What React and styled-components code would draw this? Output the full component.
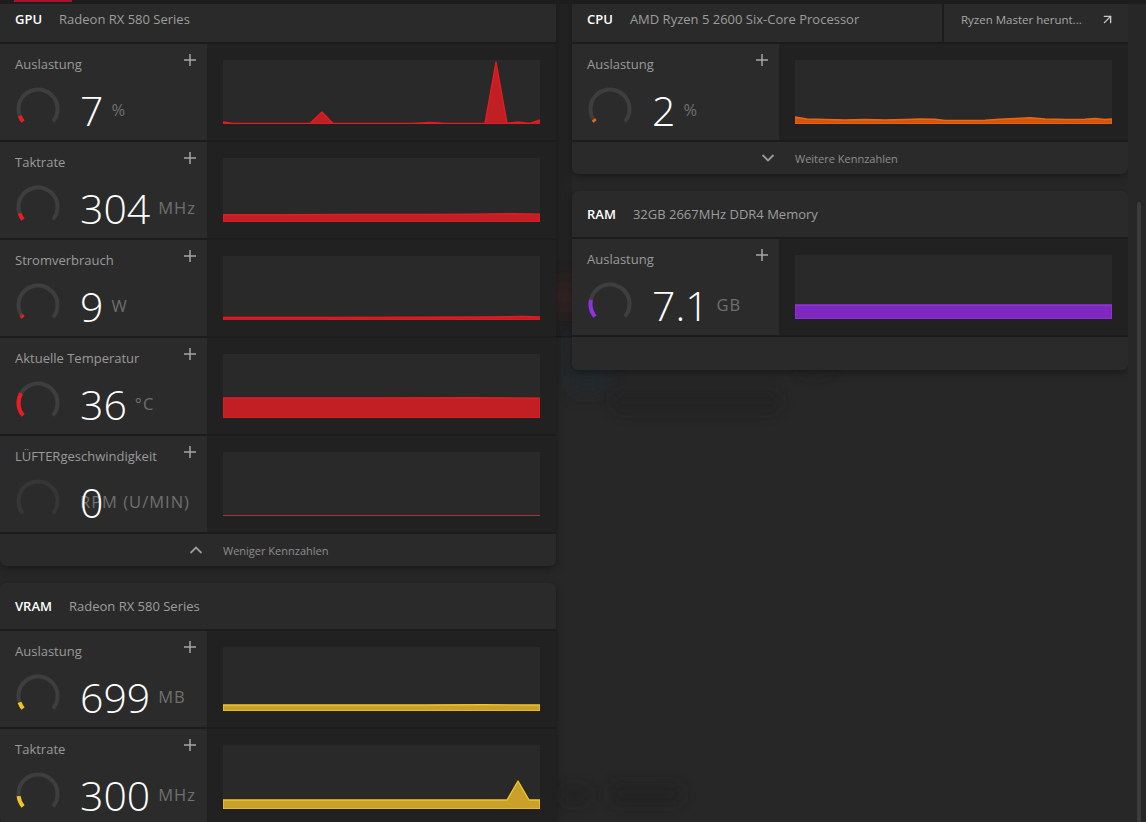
import React from "react";
import styled, { createGlobalStyle } from "styled-components";
import { ArrowUpRight } from "lucide-react";

const GlobalStyle = createGlobalStyle`
  html, body { margin: 0; padding: 0; background: #272727; }
  body { font-family: "Open Sans", "Noto Sans", "DejaVu Sans", sans-serif; color: #fff; }
  * { box-sizing: border-box; }
`;

const COLORS = {
  red: { fill: "#c11f24", stroke: "#e51b22", gauge: "#ec1c22" },
  orange: { fill: "#d4560e", stroke: "#f0650f", gauge: "#f0640f" },
  purple: { fill: "#7e28c0", stroke: "#9234de", gauge: "#9030e0" },
  yellow: { fill: "#c9a02a", stroke: "#f2c424", gauge: "#f2c424" },
};

const Screen = styled.div`
  display: grid;
  width: 1146px;
  height: 822px;
  overflow: hidden;
  background: #272727;
`;

const Backdrop = styled.svg`
  grid-area: 1 / 1;
  width: 1146px;
  height: 822px;
`;

const Frame = styled.div`
  grid-area: 1 / 1;
  display: flex;
  flex-direction: column;
  min-height: 0;
`;

const TopBar = styled.div`
  height: 4px;
  flex: none;
  background: #1d1d1d;
  padding-left: 14px;
`;

const RedTab = styled.div`
  width: 58px;
  height: 2px;
  background: #a8142c;
`;

const Body = styled.div`
  flex: 1;
  display: flex;
  min-height: 0;
`;

const Viewport = styled.div`
  flex: 1;
  overflow: hidden;
`;

const Content = styled.div`
  margin-top: -8px;
  display: flex;
  gap: 16px;
  align-items: flex-start;
`;

const Column = styled.div`
  width: 556px;
  display: flex;
  flex-direction: column;
  gap: 17px;
`;

const ScrollTrack = styled.div`
  width: 18px;
  flex: none;
  padding: 198px 5px 0 9px;
`;

const ScrollThumb = styled.div`
  height: 100%;
  border-radius: 2px;
  background: #3c3c3c;
`;

const Card = styled.section`
  display: flex;
  flex-direction: column;
  gap: 2px;
  background: #1c1c1c;
  border-radius: 6px;
  overflow: hidden;
  box-shadow: 0 3px 8px rgba(0, 0, 0, 0.35);
`;

const Header = styled.header`
  display: flex;
  gap: 2px;
  height: 46px;
`;

const HeaderMain = styled.div`
  flex: 1;
  display: flex;
  align-items: center;
  gap: 17px;
  padding: 0 15px;
  background: #2a2a2a;
`;

const Title = styled.span`
  font-size: 13px;
  font-weight: 600;
  color: #ffffff;
`;

const Subtitle = styled.span`
  font-size: 13px;
  color: #9d9d9d;
`;

const HeaderAction = styled.div`
  width: 184px;
  flex: none;
  display: flex;
  align-items: center;
  justify-content: space-between;
  padding: 0 13px 0 17px;
  background: #2a2a2a;
  font-size: 11.5px;
  color: #a8a8a8;
  svg { color: #c8c8c8; }
`;

const Row = styled.div`
  display: grid;
  grid-template-columns: 207px 1fr;
  height: 96px;
`;

const MetricPanel = styled.div`
  background: #2b2b2b;
  padding: 10px 11px 0 15px;
  display: flex;
  flex-direction: column;
`;

const MetricHead = styled.div`
  display: flex;
  justify-content: space-between;
  align-items: flex-start;
`;

const Label = styled.span`
  font-size: 13px;
  line-height: 20px;
  color: #9a9a9a;
`;

const ValueLine = styled.div`
  margin-top: 12px;
  display: flex;
  align-items: center;
  gap: 20px;
`;

const GaugeSvg = styled.svg`
  width: 44px;
  height: 44px;
  margin-left: 1px;
  flex: none;
`;

const Reading = styled.div`
  display: ${(p) => (p.$overlap ? "grid" : "flex")};
  align-items: center;
  gap: 8px;
  padding-top: 2px;
  > * { grid-area: ${(p) => (p.$overlap ? "1 / 1" : "auto")}; }
`;

const Value = styled.span`
  font-size: 41px;
  line-height: 44px;
  font-weight: 300;
  color: #ffffff;
`;

const Unit = styled.span`
  font-size: 16.5px;
  letter-spacing: 1px;
  line-height: 22px;
  color: #6f6f6f;
`;

const ChartPanel = styled.div`
  background: #212121;
  padding: 16px;
`;

const ChartSvg = styled.svg`
  display: block;
  width: 100%;
  height: 64px;
  background: #292929;
`;

const Footer = styled.div`
  display: grid;
  grid-template-columns: 207px 1fr;
  align-items: center;
  height: 32px;
  background: #2a2a2a;
`;

const FooterIcon = styled.svg`
  justify-self: end;
  margin-right: 4px;
  width: 14px;
  height: 8px;
`;

const FooterText = styled.span`
  padding-left: 16px;
  font-size: 11px;
  color: #8e8e8e;
`;

const EmptyFooter = styled.div`
  height: 33px;
  background: #2a2a2a;
`;

function PlusIcon() {
  return (
    <svg width="12" height="12" viewBox="0 0 12 12" style={{ flex: "none" }}>
      <path d="M6 0V12M0 6H12" stroke="#a6a6a6" strokeWidth="1.5" fill="none" />
    </svg>
  );
}

function Chevron({ up }) {
  return (
    <FooterIcon viewBox="0 0 14 8">
      <path
        d={up ? "M1.5 7L7 1.5L12.5 7" : "M1.5 1L7 6.5L12.5 1"}
        stroke="#9a9a9a"
        strokeWidth="1.8"
        fill="none"
      />
    </FooterIcon>
  );
}

const START = 140;
const SWEEP = 260;
function pt(a, r) {
  const rad = (a * Math.PI) / 180;
  return [22 + r * Math.cos(rad), 22 + r * Math.sin(rad)];
}
function arc(a0, a1, r) {
  const [x0, y0] = pt(a0, r);
  const [x1, y1] = pt(a1, r);
  const large = a1 - a0 > 180 ? 1 : 0;
  return `M${x0.toFixed(2)} ${y0.toFixed(2)} A${r} ${r} 0 ${large} 1 ${x1.toFixed(2)} ${y1.toFixed(2)}`;
}

function Gauge({ fraction, color, dim }) {
  const r = 19.5;
  return (
    <GaugeSvg viewBox="0 0 44 44">
      <path d={arc(START, START + SWEEP, r)} stroke={dim ? "#363636" : "#3e3e3e"} strokeWidth="4" fill="none" />
      {fraction > 0 && (
        <path d={arc(START, START + SWEEP * fraction, r)} stroke={color} strokeWidth="4" fill="none" />
      )}
    </GaugeSvg>
  );
}

function Chart({ points, color, line }) {
  const W = 317;
  const H = 64;
  if (line) {
    const d = points.map(([x, h], i) => `${i ? "L" : "M"}${x} ${H - h}`).join(" ");
    return (
      <ChartSvg viewBox={`0 0 ${W} ${H}`} preserveAspectRatio="none">
        <path d={d} stroke={line} strokeWidth="1" fill="none" />
      </ChartSvg>
    );
  }
  const c = COLORS[color];
  const d =
    `M0 ${H} ` + points.map(([x, h]) => `L${x} ${(H - h).toFixed(2)}`).join(" ") + ` L${W} ${H} Z`;
  return (
    <ChartSvg viewBox={`0 0 ${W} ${H}`} preserveAspectRatio="none">
      <path d={d} fill={c.fill} stroke={c.stroke} strokeWidth="1.4" strokeLinejoin="round" />
    </ChartSvg>
  );
}

function Metric({ label, value, unit, fraction, color, points, line, overlap, dim }) {
  return (
    <Row>
      <MetricPanel>
        <MetricHead>
          <Label>{label}</Label>
          <PlusIcon />
        </MetricHead>
        <ValueLine>
          <Gauge fraction={fraction} color={COLORS[color].gauge} dim={dim} />
          <Reading $overlap={overlap}>
            {overlap ? (
              <>
                <Unit>{unit}</Unit>
                <Value>{value}</Value>
              </>
            ) : (
              <>
                <Value>{value}</Value>
                <Unit>{unit}</Unit>
              </>
            )}
          </Reading>
        </ValueLine>
      </MetricPanel>
      <ChartPanel>
        <Chart points={points} color={color} line={line} />
      </ChartPanel>
    </Row>
  );
}

const gpuLoad = [
  [0, 2], [10, 0.6], [87, 0.6], [99, 12], [110, 0.6], [190, 0.6], [207, 1.6], [222, 0.6],
  [262, 0.6], [273, 62], [284, 0.6], [295, 2], [307, 0.6], [317, 4],
];
const gpuClock = [[0, 7.2], [60, 7.2], [130, 7.5], [200, 7.5], [250, 7.8], [290, 8.3], [317, 7.9]];
const gpuPower = [[0, 2.6], [100, 2.6], [200, 2.9], [270, 3], [300, 3.6], [317, 3]];
const gpuTemp = [[0, 20], [150, 20], [250, 20.3], [317, 19.8]];
const gpuFan = [[0, 0.5], [317, 0.5]];
const cpuLoad = [
  [0, 7], [12, 5], [30, 4.5], [50, 4], [70, 4.5], [90, 4], [110, 4.5], [125, 5], [140, 4.8],
  [150, 3.5], [170, 3.5], [190, 3.8], [205, 4.8], [220, 5.5], [235, 6.2], [250, 5], [270, 4.5],
  [290, 4.8], [300, 5.5], [310, 4.5], [317, 5],
];
const ramLoad = [[0, 14], [317, 14]];
const vramLoad = [[0, 6], [200, 6], [260, 6.3], [317, 6]];
const vramClock = [[0, 9], [284, 9], [295, 28], [306, 9], [317, 9]];

export default function App() {
  return (
    <>
      <GlobalStyle />
      <Screen>
        <Backdrop viewBox="0 0 1146 822">
          <defs>
            <filter id="b6" x="-50%" y="-150%" width="200%" height="400%">
              <feGaussianBlur stdDeviation="7" />
            </filter>
            <filter id="b10" x="-100%" y="-100%" width="300%" height="300%">
              <feGaussianBlur stdDeviation="10" />
            </filter>
          </defs>
          <rect x="556" y="0" width="16" height="336" fill="#232323" />
          <rect x="540" y="336" width="40" height="1.5" fill="#1b1b1b" />
          <rect x="553" y="282" width="26" height="30" fill="#4a2222" filter="url(#b10)" opacity="0.6" />
          <rect x="574" y="330" width="30" height="60" fill="#1c2c36" filter="url(#b10)" opacity="0.7" />
          <rect x="612" y="392" width="168" height="20" rx="8" fill="#1e1e1e" filter="url(#b6)" opacity="0.45" />
          <rect x="560" y="786" width="30" height="18" rx="8" fill="#1e1e1e" filter="url(#b6)" opacity="0.45" />
          <rect x="610" y="783" width="72" height="22" rx="8" fill="#1e1e1e" filter="url(#b6)" opacity="0.45" />
          <rect x="800" y="358" width="30" height="18" rx="8" fill="#202020" filter="url(#b6)" opacity="0.4" />
        </Backdrop>
        <Frame>
          <TopBar>
            <RedTab />
          </TopBar>
          <Body>
            <Viewport>
              <Content>
                <Column>
                  <Card>
                    <Header>
                      <HeaderMain>
                        <Title>GPU</Title>
                        <Subtitle>Radeon RX 580 Series</Subtitle>
                      </HeaderMain>
                    </Header>
                    <Metric label="Auslastung" value="7" unit="%" fraction={0.075} color="red" points={gpuLoad} />
                    <Metric label="Taktrate" value="304" unit="MHz" fraction={0.08} color="red" points={gpuClock} />
                    <Metric label="Stromverbrauch" value="9" unit="W" fraction={0.035} color="red" points={gpuPower} />
                    <Metric label="Aktuelle Temperatur" value="36" unit="°C" fraction={0.27} color="red" points={gpuTemp} />
                    <Metric
                      label="LÜFTERgeschwindigkeit"
                      value="0"
                      unit="RPM (U/MIN)"
                      fraction={0}
                      color="red"
                      points={gpuFan}
                      line="#a33535"
                      overlap
                      dim
                    />
                    <Footer>
                      <Chevron up />
                      <FooterText>Weniger Kennzahlen</FooterText>
                    </Footer>
                  </Card>
                  <Card>
                    <Header>
                      <HeaderMain>
                        <Title>VRAM</Title>
                        <Subtitle>Radeon RX 580 Series</Subtitle>
                      </HeaderMain>
                    </Header>
                    <Metric label="Auslastung" value="699" unit="MB" fraction={0.08} color="yellow" points={vramLoad} />
                    <Metric label="Taktrate" value="300" unit="MHz" fraction={0.13} color="yellow" points={vramClock} />
                  </Card>
                </Column>
                <Column>
                  <Card>
                    <Header>
                      <HeaderMain>
                        <Title>CPU</Title>
                        <Subtitle>AMD Ryzen 5 2600 Six-Core Processor</Subtitle>
                      </HeaderMain>
                      <HeaderAction>
                        <span>Ryzen Master herunt...</span>
                        <ArrowUpRight size={15} strokeWidth={2.2} />
                      </HeaderAction>
                    </Header>
                    <Metric label="Auslastung" value="2" unit="%" fraction={0.03} color="orange" points={cpuLoad} />
                    <Footer>
                      <Chevron />
                      <FooterText>Weitere Kennzahlen</FooterText>
                    </Footer>
                  </Card>
                  <Card>
                    <Header>
                      <HeaderMain>
                        <Title>RAM</Title>
                        <Subtitle>32GB 2667MHz DDR4 Memory</Subtitle>
                      </HeaderMain>
                    </Header>
                    <Metric label="Auslastung" value="7.1" unit="GB" fraction={0.2} color="purple" points={ramLoad} />
                    <EmptyFooter />
                  </Card>
                </Column>
              </Content>
            </Viewport>
            <ScrollTrack>
              <ScrollThumb />
            </ScrollTrack>
          </Body>
        </Frame>
      </Screen>
    </>
  );
}
